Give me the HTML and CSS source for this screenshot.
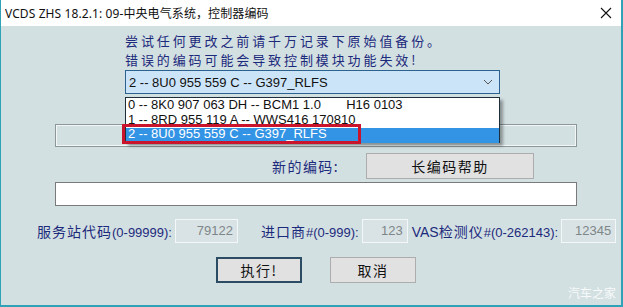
FILE: index.html
```html
<!DOCTYPE html>
<html lang="zh">
<head>
<meta charset="utf-8">
<link rel="stylesheet" href="styles.css">
</head>
<body>
<div class="window">
  <div class="titlebar">
    <span class="title">VCDS ZHS 18.2.1: 09-中央电气系统，控制器编码</span>
    <svg class="close" width="12" height="12" viewBox="0 0 12 12"><path d="M1 1L11 11M11 1L1 11" stroke="#111" stroke-width="1.1" fill="none"/></svg>
  </div>
  <div class="client">
    <div class="warning">
      <div class="wline">尝试任何更改之前请千万记录下原始值备份。</div>
      <div class="wline">错误的编码可能会导致控制模块功能失效!</div>
    </div>
    <div class="combo-wrap">
      <div class="combo">
        <span class="combo-text">2 -- 8U0 955 559 C -- G397_RLFS</span>
        <svg class="chev" width="10" height="6" viewBox="0 0 10 6"><path d="M1 1L5 5L9 1" stroke="#555" stroke-width="1" fill="none"/></svg>
      </div>
      <div class="droplist">
        <div class="item">0 -- 8K0 907 063 DH -- BCM1 1.0&nbsp;&nbsp;&nbsp;&nbsp;&nbsp;&nbsp;&nbsp;H16 0103</div>
        <div class="item">1 -- 8RD 955 119 A -- WWS416 170810</div>
        <div class="item selected">2 -- 8U0 955 559 C -- G397_RLFS</div>
      </div>
      <div class="redbox"></div>
    </div>
    <div class="readonly-box"></div>
    <div class="code-row">
      <span class="code-label">新的编码:</span>
      <button class="btn help-btn">长编码帮助</button>
    </div>
    <div class="code-input"></div>
    <div class="fields">
      <span class="flabel f1">服务站代码<span class="lat">(0-99999):</span></span>
      <span class="num n1">79122</span>
      <span class="flabel f2">进口商<span class="lat">#(0-999):</span></span>
      <span class="num n2">123</span>
      <span class="flabel f3"><span class="lat big">VAS</span>检测仪<span class="lat">#(0-262143):</span></span>
      <span class="num n3">12345</span>
    </div>
    <div class="actions">
      <button class="btn default-btn">执行!</button>
      <button class="btn cancel-btn">取消</button>
    </div>
    <div class="watermark">汽车之家</div>
  </div>
</div>
</body>
</html>
```

FILE: styles.css
```css
* { box-sizing: border-box; }
html, body { margin: 0; padding: 0; }
body {
  width: 623px;
  height: 307px;
  overflow: hidden;
  font-family: "Noto Sans CJK SC", "Liberation Sans", sans-serif;
}
.window {
  width: 623px;
  height: 307px;
  border-left: 1px solid #2fa2b8;
  border-right: 2px solid #2fa2b8;
  border-bottom: 2px solid #2fa2b8;
  display: flex;
  flex-direction: column;
  background: #d3e0e2;
}
.titlebar {
  height: 26px;
  flex: none;
  background: #fff;
  display: flex;
  align-items: center;
  justify-content: space-between;
  padding: 0 9px 0 4px;
}
.title {
  font-family: "Noto Sans", "Noto Sans CJK SC", sans-serif;
  font-size: 12px;
  color: #111;
  letter-spacing: 0.1px;
}
.close { display: block; }
.client {
  position: relative;
  flex: 1;
  display: flex;
  flex-direction: column;
}
.warning {
  margin: 5px 0 0 124px;
  font-size: 13px;
  letter-spacing: 2.9px;
  color: #1c2a7c;
}
.wline {
  height: 19px;
  line-height: 19px;
  white-space: nowrap;
}
.combo-wrap {
  position: relative;
  margin: 1px 0 0 124px;
  width: 375px;
}
.combo {
  height: 24px;
  background: #cce4f7;
  border: 1px solid #2c628f;
  display: flex;
  align-items: center;
  justify-content: space-between;
  padding: 0 6px 0 3px;
}
.combo-text, .item {
  font-family: "Liberation Sans", sans-serif;
  font-size: 13px;
  color: #111;
}
.droplist {
  position: absolute;
  left: 0;
  top: 27px;
  width: 375px;
  height: 46px;
  background: #fff;
  border: 1px solid #1e2f3c;
  border-bottom: none;
  box-shadow: 3px 3px 3px rgba(0, 0, 0, 0.35);
  z-index: 2;
}
.item {
  height: 15px;
  line-height: 14px;
  padding-left: 2px;
  white-space: pre;
}
.item.selected {
  background: #3393e4;
  color: #fff;
  line-height: 12px;
}
.redbox {
  position: absolute;
  left: -3px;
  top: 54px;
  width: 239px;
  height: 20px;
  border: 3px solid #c9142c;
  z-index: 3;
}
.readonly-box {
  margin: 30px 0 0 54px;
  width: 522px;
  height: 23px;
  border: 1px solid #8d9799;
  box-shadow: inset 0 0 0 1px #f2f6f6;
}
.code-row {
  margin-top: 6px;
  height: 26px;
  display: flex;
  align-items: center;
}
.code-label {
  width: 338px;
  text-align: right;
  font-size: 14px;
  letter-spacing: 1.4px;
  color: #1c2a7c;
}
.btn {
  font-family: "Noto Sans CJK SC", sans-serif;
  font-size: 14px;
  color: #111;
  background: #e1e1e1;
  border: 1px solid #adadad;
  padding: 0;
  letter-spacing: 1.5px;
}
.help-btn {
  margin-left: 27px;
  width: 168px;
  height: 26px;
}
.code-input {
  margin: 3px 0 0 54px;
  width: 522px;
  height: 24px;
  background: #fff;
  border: 1px solid #7a7a7a;
}
.fields {
  margin-top: 13px;
  height: 24px;
  display: flex;
  align-items: center;
  font-size: 14px;
  color: #1c2a7c;
}
.flabel { white-space: nowrap; letter-spacing: 1px; }
.lat {
  font-family: "Liberation Sans", sans-serif;
  font-size: 13px;
  letter-spacing: 0;
}
.lat.big { font-size: 14px; }
.f1 { margin-left: 36px; }
.f2 { margin-left: 23px; }
.f3 { margin-left: 4px; }
.num {
  height: 24px;
  line-height: 22px;
  text-align: right;
  padding-right: 4px;
  font-family: "Liberation Sans", sans-serif;
  font-size: 13px;
  color: #7e8688;
  background: #d9e3e5;
  border: 1px solid #f4f7f7;
  margin-left: 3px;
}
.n1 { width: 63px; }
.n2 { width: 46px; }
.n3 { width: 55px; }
.actions {
  margin-top: 14px;
  height: 26px;
  display: flex;
}
.default-btn {
  margin-left: 215px;
  width: 86px;
  height: 26px;
  border: 2px solid #2b4c63;
}
.cancel-btn {
  margin-left: 28px;
  width: 86px;
  height: 26px;
}
.watermark {
  position: absolute;
  right: 5px;
  bottom: 4px;
  font-size: 12px;
  color: rgba(255, 255, 255, 0.85);
}
```
